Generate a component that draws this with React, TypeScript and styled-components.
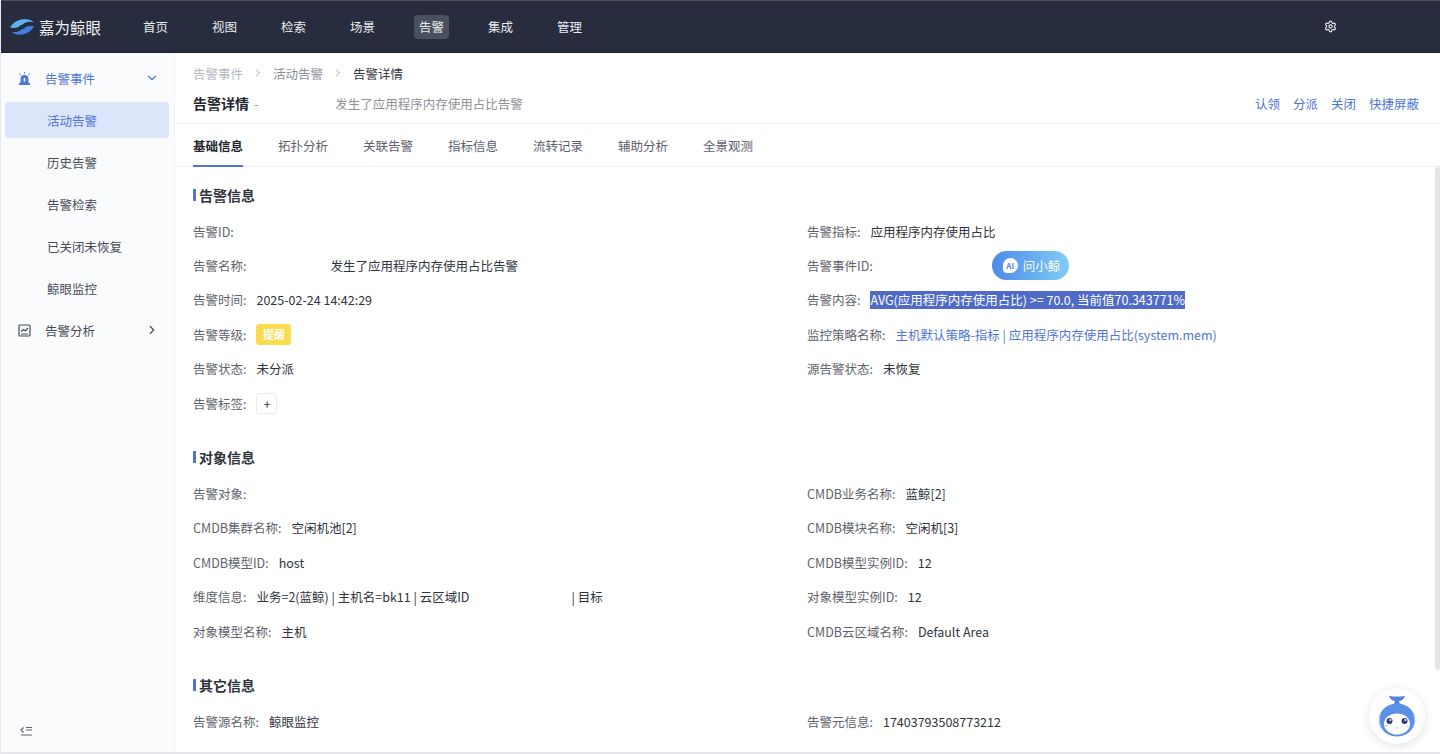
import React from "react";
import styled, { createGlobalStyle } from "styled-components";
import { ChevronDown, ChevronRight, Settings } from "lucide-react";

const GlobalStyle = createGlobalStyle`
  html, body {
    margin: 0;
    height: 100%;
    overflow: hidden;
    background: #fff;
    font-family: "Noto Sans CJK SC", "Inter", sans-serif;
    font-size: 12.5px;
    color: #30343c;
  }
`;

const Page = styled.div`
  width: 1440px;
  height: 754px;
  display: flex;
  flex-direction: column;
  box-sizing: border-box;
  border-bottom: 2px solid #e6e7ea;
  border-left: 1px solid #e8e9ec;
  overflow: hidden;
  position: relative;
`;

const TopBar = styled.header`
  height: 53px;
  flex: none;
  box-sizing: border-box;
  margin-left: -1px;
  display: flex;
  align-items: center;
  padding: 0 103px 0 9px;
  background: #272d3e;
  border-top: 1px solid #50535c;
  border-bottom: 1px solid #1e2330;
`;

const Logo = styled.div`
  width: 129px;
  display: flex;
  align-items: center;
  gap: 4px;
  color: #eef0f4;
  font-size: 15.5px;
  letter-spacing: 0;
`;

const Nav = styled.nav`
  display: flex;
  gap: 9px;
  flex: 1;
`;

const NavItem = styled.div<{ $active?: boolean }>`
  padding: 0 5px;
  height: 24px;
  line-height: 24px;
  border-radius: 4px;
  color: #e9ebef;
  background: ${(p) => (p.$active ? "#4b505e" : "transparent")};
  width: 25px;
  text-align: center;
  white-space: nowrap;
  display: flex;
  justify-content: center;
  margin-right: 25px;
  &:last-child {
    margin-right: 0;
  }
`;

const Body = styled.div`
  flex: 1;
  display: flex;
  min-height: 0;
`;

const Sidebar = styled.aside`
  width: 174px;
  flex: none;
  box-sizing: border-box;
  padding: 4px 5px 0 4px;
  background: #fafbfd;
  border-right: 1px solid #f0f1f4;
  display: flex;
  flex-direction: column;
  position: relative;
`;

const MenuGroup = styled.div<{ $open?: boolean }>`
  height: 42px;
  display: flex;
  align-items: center;
  padding: 0 10px 0 13px;
  gap: 14px;
  color: ${(p) => (p.$open ? "#4f74d9" : "#474c57")};
  svg.arrow {
    margin-left: auto;
  }
`;

const MenuItem = styled.div<{ $active?: boolean }>`
  height: 36px;
  margin: 3px 0;
  border-radius: 4px;
  display: flex;
  align-items: center;
  padding-left: 42px;
  color: ${(p) => (p.$active ? "#4f74d9" : "#474c57")};
  background: ${(p) => (p.$active ? "#dce6fa" : "transparent")};
`;

const Collapse = styled.div`
  position: absolute;
  left: 19px;
  bottom: 15px;
  display: flex;
`;

const Main = styled.main`
  flex: 1;
  min-width: 0;
  display: flex;
  flex-direction: column;
  background: #fff;
`;

const Head = styled.div`
  height: 71px;
  flex: none;
  box-sizing: border-box;
  padding: 11px 21px 0 18px;
  border-bottom: 1px solid #f1f2f4;
`;

const Crumbs = styled.div`
  height: 18px;
  display: flex;
  align-items: center;
  gap: 9px;
  color: #33363d;
`;

const Crumb = styled.span<{ $tone?: string }>`
  color: ${(p) => p.$tone || "#33363d"};
`;

const TitleRow = styled.div`
  margin-top: 9px;
  display: flex;
  align-items: center;
  height: 24px;
`;

const Title = styled.h1`
  margin: 0;
  font-size: 14px;
  font-weight: 700;
  color: #24272e;
`;

const Subtitle = styled.span`
  color: #8d919a;
  margin-left: 5px;
`;

const SubtitleText = styled.span`
  color: #8d919a;
  margin-left: 77px;
`;

const Actions = styled.div`
  margin-left: auto;
  display: flex;
  gap: 13px;
  color: #4f74d9;
`;

const Tabs = styled.div`
  height: 43px;
  flex: none;
  box-sizing: border-box;
  padding-left: 18px;
  display: flex;
  gap: 35px;
  border-bottom: 1px solid #eceef1;
`;

const Tab = styled.div<{ $active?: boolean }>`
  height: 43px;
  line-height: 44px;
  box-sizing: border-box;
  color: ${(p) => (p.$active ? "#24272e" : "#5c606a")};
  font-weight: ${(p) => (p.$active ? 600 : 400)};
  border-bottom: ${(p) => (p.$active ? "2px solid #4f74d9" : "none")};
`;

const Scroll = styled.div`
  flex: 1;
  min-height: 0;
  overflow: hidden;
  padding: 17px 0 0 18px;
  position: relative;
`;

const ScrollThumb = styled.div`
  position: absolute;
  top: 0;
  right: 0;
  width: 5px;
  height: 503px;
  background: #e4e5e8;
  border-radius: 3px;
`;

const Section = styled.section<{ $gap: number }>`
  margin-bottom: ${(p) => p.$gap}px;
`;

const SectionTitle = styled.h2`
  margin: 0 0 8px;
  height: 22px;
  line-height: 22px;
  font-size: 14px;
  font-weight: 700;
  color: #30343c;
  padding-left: 6px;
  position: relative;
  &::before {
    content: "";
    position: absolute;
    left: 0;
    top: 5px;
    width: 3px;
    height: 12px;
    background: #4f74d9;
  }
`;

const Grid = styled.div`
  display: grid;
  grid-template-columns: 614px 1fr;
  grid-auto-rows: 34.4px;
`;

const Field = styled.div`
  display: flex;
  align-items: center;
  white-space: nowrap;
  min-width: 0;
`;

const Label = styled.span`
  color: #5f636c;
  margin-right: 10px;
`;

const Value = styled.span`
  color: #30343c;
`;

const Masked = styled.span<{ $w: number }>`
  display: inline-block;
  width: ${(p) => p.$w}px;
`;

const LinkValue = styled.span`
  color: #4f74d9;
`;

const Selected = styled.span`
  color: #fff;
  background: #4f6bc6;
  line-height: 18px;
  display: inline-block;
`;

const Level = styled.span`
  width: 35px;
  height: 21px;
  line-height: 21px;
  text-align: center;
  border-radius: 3px;
  background: #fcdb4f;
  color: #fff;
  font-size: 11px;
  font-weight: 700;
`;

const AddTag = styled.span`
  width: 21px;
  height: 21px;
  box-sizing: border-box;
  border: 1px solid #e9eaed;
  border-radius: 3px;
  display: flex;
  align-items: center;
  justify-content: center;
  font-size: 12px;
  color: #30343c;
`;

const AskButton = styled.div`
  width: 77px;
  height: 29px;
  box-sizing: border-box;
  padding-left: 11px;
  border-radius: 15px;
  display: flex;
  align-items: center;
  gap: 5px;
  color: #fff;
  background: linear-gradient(90deg, #4c8aea, #80cdf4);
`;

const AiBadge = styled.span`
  width: 15px;
  height: 15px;
  border-radius: 50% 50% 50% 4px;
  background: #fff;
  color: #4c8aea;
  font-size: 8px;
  font-weight: 700;
  line-height: 15px;
  text-align: center;
`;

const BotButton = styled.div`
  position: absolute;
  right: 15px;
  bottom: 8px;
  width: 56px;
  height: 56px;
  border-radius: 50%;
  background: #fff;
  box-shadow: 0 2px 10px rgba(40, 50, 70, 0.14);
  display: flex;
  align-items: center;
  justify-content: center;
`;

const LogoMark = () => (
  <svg width="26" height="18" viewBox="0 0 26 18">
    <path d="M1 9.5C5 3 11 .8 17 1.2c3.5.2 6.5 1.4 8 3-3-.8-6.500-.8-9 .6-2.500 1.400-4 3.400-7 4.400-3 .9-5.700.8-8 .3z" fill="#5fb4ee" />
    <path d="M25 8.500c-3.800 6-9.500 8.500-15 8.200-3.500-.2-6-1.400-7.500-3 3 .7 6 .5 8.500-.9 2.500-1.400 4-3.300 7-4.200 2.700-.8 5.200-.6 7-.1z" fill="#3f7fe3" />
    <ellipse cx="13" cy="9" rx="3" ry="2" fill="#272d3e" />
  </svg>
);

const AlarmIcon = () => (
  <svg width="13" height="13" viewBox="0 0 13 13" fill="#4f74d9">
    <path d="M2.500 12V7a4 4 0 0 1 8 0v5z" />
    <rect x="1" y="11" width="11" height="2" />
    <path d="M1 1.500l1.800 1.600M12 1.500l-1.800 1.600M6.500 0v1.800" stroke="#4f74d9" strokeWidth="1" />
    <rect x="5.700" y="6" width="1.600" height="3.500" fill="#fff" />
  </svg>
);

const ChartIcon = () => (
  <svg width="13" height="13" viewBox="0 0 13 13" fill="none" stroke="#474c57" strokeWidth="1.200">
    <rect x="1" y="1" width="11" height="11" rx="1" />
    <path d="M3 7.500l2.500-2 2 1.500L10 4M3 10h7" />
  </svg>
);

const CollapseIcon = () => (
  <svg width="13" height="11" viewBox="0 0 13 11" fill="none" stroke="#5c606a" strokeWidth="1.200">
    <path d="M3.500 1.500L1 4l2.500 2.500M6 1.500h6M6 4h6M1 9h11" />
  </svg>
);

const BotIcon = () => (
  <svg width="38" height="42" viewBox="0 0 38 42">
    <path d="M11 1c3 .6 5.500.6 8 .6s5-.2 8-.6c-.8 3-3.500 4.800-6 5.200l1.500 4.800h-7L17 6.200C14.500 5.800 11.800 4 11 1z" fill="#4f86e0" />
    <ellipse cx="19" cy="25" rx="18" ry="16.500" fill="#5a90e6" />
    <path d="M3 33a17 17 0 0 1-1-13M35 33a17 17 0 0 0 1-13" stroke="#a9c8f3" strokeWidth="1" fill="none" />
    <ellipse cx="19" cy="29" rx="13" ry="10.500" fill="#fff" />
    <circle cx="11.500" cy="26" r="3" fill="#2c3d73" />
    <circle cx="26.500" cy="26" r="3" fill="#2c3d73" />
    <circle cx="12.300" cy="25" r="1" fill="#fff" />
    <circle cx="27.300" cy="25" r="1" fill="#fff" />
    <ellipse cx="8" cy="31" rx="2" ry="1" fill="#f9d6d6" />
    <ellipse cx="30" cy="31" rx="2" ry="1" fill="#f9d6d6" />
    <path d="M17.500 32.500q1.500 1.200 3 0" stroke="#c9ccd4" fill="none" />
  </svg>
);

const navItems = ["首页", "视图", "检索", "场景", "告警", "集成", "管理"];
const tabs = ["基础信息", "拓扑分析", "关联告警", "指标信息", "流转记录", "辅助分析", "全景观测"];
const subMenus = ["活动告警", "历史告警", "告警检索", "已关闭未恢复", "鲸眼监控"];

function App() {
  return (
    <Page>
      <GlobalStyle />
      <TopBar>
        <Logo>
          <LogoMark />
          嘉为鲸眼
        </Logo>
        <Nav>
          {navItems.map((item) => (
            <NavItem key={item} $active={item === "告警"}>
              {item}
            </NavItem>
          ))}
        </Nav>
        <Settings size={13} color="#f1f2f5" strokeWidth={2} />
      </TopBar>
      <Body>
        <Sidebar>
          <MenuGroup $open>
            <AlarmIcon />
            告警事件
            <ChevronDown className="arrow" size={14} />
          </MenuGroup>
          {subMenus.map((item) => (
            <MenuItem key={item} $active={item === "活动告警"}>
              {item}
            </MenuItem>
          ))}
          <MenuGroup>
            <ChartIcon />
            告警分析
            <ChevronRight className="arrow" size={14} />
          </MenuGroup>
          <Collapse>
            <CollapseIcon />
          </Collapse>
        </Sidebar>
        <Main>
          <Head>
            <Crumbs>
              <Crumb $tone="#b4b7be">告警事件</Crumb>
              <ChevronRight size={12} color="#a4a7ae" />
              <Crumb $tone="#8d919a">活动告警</Crumb>
              <ChevronRight size={12} color="#a4a7ae" />
              <Crumb>告警详情</Crumb>
            </Crumbs>
            <TitleRow>
              <Title>告警详情</Title>
              <Subtitle>-</Subtitle>
              <SubtitleText>发生了应用程序内存使用占比告警</SubtitleText>
              <Actions>
                <span>认领</span>
                <span>分派</span>
                <span>关闭</span>
                <span>快捷屏蔽</span>
              </Actions>
            </TitleRow>
          </Head>
          <Tabs>
            {tabs.map((tab) => (
              <Tab key={tab} $active={tab === "基础信息"}>
                {tab}
              </Tab>
            ))}
          </Tabs>
          <Scroll>
            <ScrollThumb />
            <Section $gap={26}>
              <SectionTitle>告警信息</SectionTitle>
              <Grid>
                <Field>
                  <Label>告警ID:</Label>
                </Field>
                <Field>
                  <Label>告警指标:</Label>
                  <Value>应用程序内存使用占比</Value>
                </Field>
                <Field>
                  <Label>告警名称:</Label>
                  <Masked $w={74} />
                  <Value>发生了应用程序内存使用占比告警</Value>
                </Field>
                <Field>
                  <Label>告警事件ID:</Label>
                  <Masked $w={109} />
                  <AskButton>
                    <AiBadge>AI</AiBadge>
                    问小鲸
                  </AskButton>
                </Field>
                <Field>
                  <Label>告警时间:</Label>
                  <Value>2025-02-24 14:42:29</Value>
                </Field>
                <Field>
                  <Label>告警内容:</Label>
                  <Selected>AVG(应用程序内存使用占比) &gt;= 70.0, 当前值70.343771%</Selected>
                </Field>
                <Field>
                  <Label>告警等级:</Label>
                  <Level>提醒</Level>
                </Field>
                <Field>
                  <Label>监控策略名称:</Label>
                  <LinkValue>主机默认策略-指标 | 应用程序内存使用占比(system.mem)</LinkValue>
                </Field>
                <Field>
                  <Label>告警状态:</Label>
                  <Value>未分派</Value>
                </Field>
                <Field>
                  <Label>源告警状态:</Label>
                  <Value>未恢复</Value>
                </Field>
                <Field>
                  <Label>告警标签:</Label>
                  <AddTag>+</AddTag>
                </Field>
              </Grid>
            </Section>
            <Section $gap={26}>
              <SectionTitle>对象信息</SectionTitle>
              <Grid>
                <Field>
                  <Label>告警对象:</Label>
                </Field>
                <Field>
                  <Label>CMDB业务名称:</Label>
                  <Value>蓝鲸[2]</Value>
                </Field>
                <Field>
                  <Label>CMDB集群名称:</Label>
                  <Value>空闲机池[2]</Value>
                </Field>
                <Field>
                  <Label>CMDB模块名称:</Label>
                  <Value>空闲机[3]</Value>
                </Field>
                <Field>
                  <Label>CMDB模型ID:</Label>
                  <Value>host</Value>
                </Field>
                <Field>
                  <Label>CMDB模型实例ID:</Label>
                  <Value>12</Value>
                </Field>
                <Field>
                  <Label>维度信息:</Label>
                  <Value>业务=2(蓝鲸) | 主机名=bk11 | 云区域ID</Value>
                  <Masked $w={102} />
                  <Value>| 目标</Value>
                </Field>
                <Field>
                  <Label>对象模型实例ID:</Label>
                  <Value>12</Value>
                </Field>
                <Field>
                  <Label>对象模型名称:</Label>
                  <Value>主机</Value>
                </Field>
                <Field>
                  <Label>CMDB云区域名称:</Label>
                  <Value>Default Area</Value>
                </Field>
              </Grid>
            </Section>
            <Section $gap={0}>
              <SectionTitle>其它信息</SectionTitle>
              <Grid>
                <Field>
                  <Label>告警源名称:</Label>
                  <Value>鲸眼监控</Value>
                </Field>
                <Field>
                  <Label>告警元信息:</Label>
                  <Value>17403793508773212</Value>
                </Field>
              </Grid>
            </Section>
          </Scroll>
        </Main>
      </Body>
      <BotButton>
        <BotIcon />
      </BotButton>
    </Page>
  );
}

export default App;
